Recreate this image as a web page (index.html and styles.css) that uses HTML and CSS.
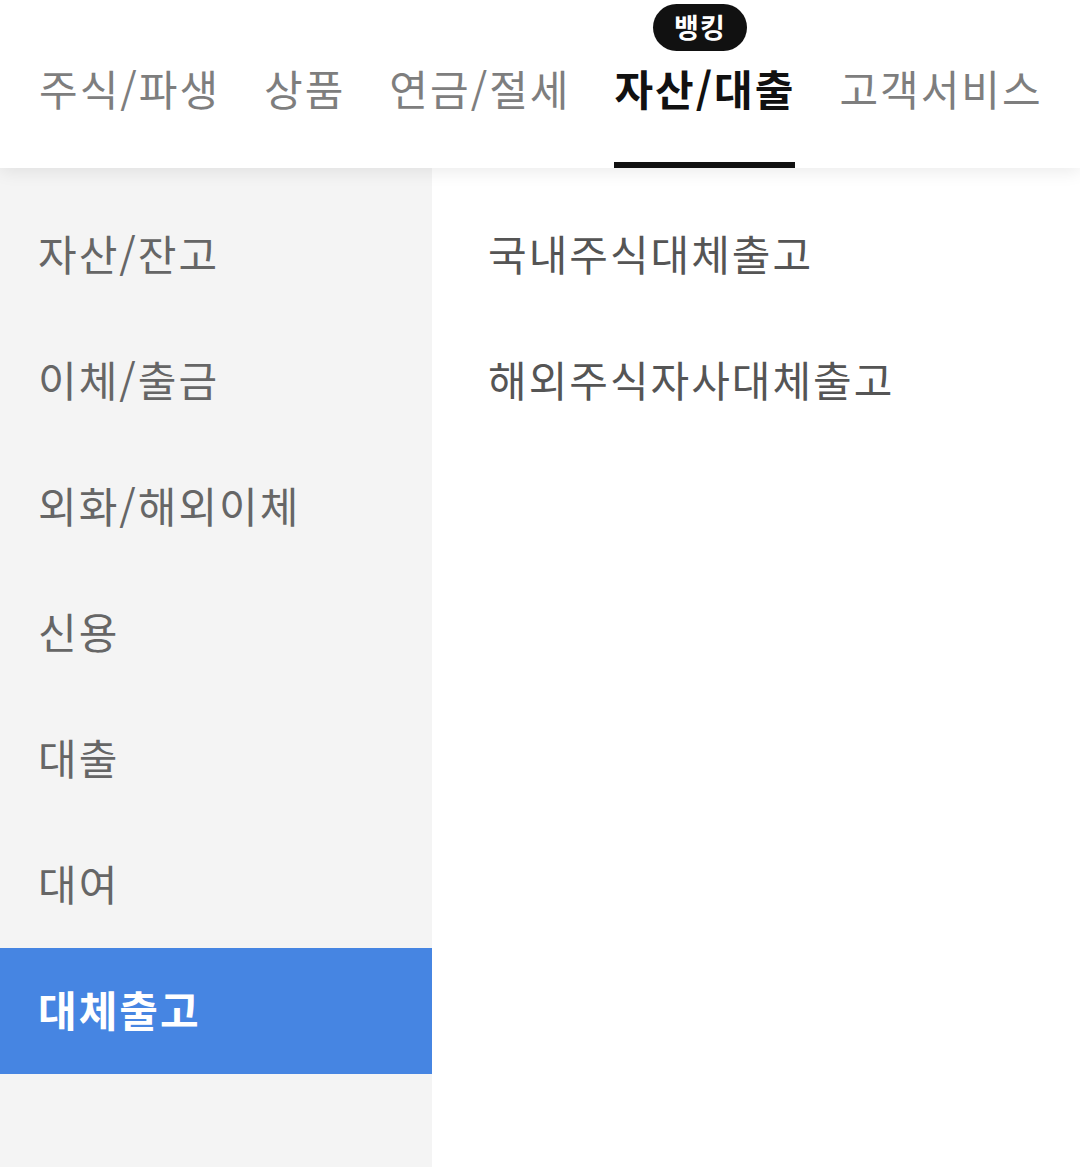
FILE: index.html
```html
<!DOCTYPE html>
<html lang="ko">
<head>
    <meta charset="UTF-8">
    <meta name="viewport" content="width=device-width, initial-scale=1.0">
    <title>자산/대출</title>
    <link rel="stylesheet" href="styles.css">
</head>
<body>

    <div class="header">
        <div class="tab">주식/파생</div>
        <div class="tab">상품</div>
        <div class="tab">연금/절세</div>
        <div class="tab active">
            <span class="badge">뱅킹</span>
            자산/대출
        </div>
        <div class="tab">고객서비스</div>
    </div>

    <div class="menu">
        <div class="side">
            <div class="side-item">자산/잔고</div>
            <div class="side-item">이체/출금</div>
            <div class="side-item">외화/해외이체</div>
            <div class="side-item">신용</div>
            <div class="side-item">대출</div>
            <div class="side-item">대여</div>
            <div class="side-item selected">대체출고</div>
        </div>
        <div class="sub">
            <div class="sub-item">국내주식대체출고</div>
            <div class="sub-item">해외주식자사대체출고</div>
        </div>
    </div>

</body>
</html>
```

FILE: styles.css
```css
body {
    margin: 0;
    font-family: "Noto Sans CJK KR", "Noto Sans", sans-serif;
    background: #fff;
    height: 1167px;
    overflow: hidden;
    display: flex;
    flex-direction: column;
}
.header {
    height: 168px;
    display: flex;
    align-items: flex-end;
    gap: 44px;
    padding-left: 39px;
    background: #fff;
    box-shadow: 0 4px 16px rgba(0, 0, 0, 0.08);
    position: relative;
    z-index: 1;
    box-sizing: border-box;
}
.tab {
    position: relative;
    font-size: 42px;
    letter-spacing: 2px;
    line-height: 1;
    color: #7e7e7e;
    padding-bottom: 59px;
    white-space: nowrap;
}
.tab.active {
    color: #111;
    font-weight: 700;
}
.tab.active::after {
    content: "";
    position: absolute;
    left: 0;
    right: 0;
    bottom: 0;
    height: 6px;
    background: #111;
}
.badge {
    position: absolute;
    left: calc(50% - 5px);
    top: -63px;
    transform: translateX(-50%);
    width: 94px;
    height: 47px;
    border-radius: 24px;
    background: #111;
    color: #fff;
    font-size: 27px;
    letter-spacing: 1px;
    font-weight: 700;
    line-height: 45px;
    text-align: center;
}
.menu {
    flex: 1;
    display: flex;
}
.side {
    width: 432px;
    background: #f4f4f4;
    padding-top: 24px;
}
.side-item {
    height: 126px;
    box-sizing: border-box;
    padding-bottom: 5px;
    display: flex;
    align-items: center;
    padding-left: 38px;
    font-size: 42px;
    letter-spacing: 2px;
    color: #666;
}
.side-item.selected {
    background: #4685e2;
    color: #fff;
    font-weight: 700;
}
.sub {
    flex: 1;
    padding-top: 24px;
}
.sub-item {
    height: 126px;
    box-sizing: border-box;
    padding-bottom: 5px;
    display: flex;
    align-items: center;
    padding-left: 56px;
    font-size: 42px;
    letter-spacing: 2px;
    color: #555;
}
```
